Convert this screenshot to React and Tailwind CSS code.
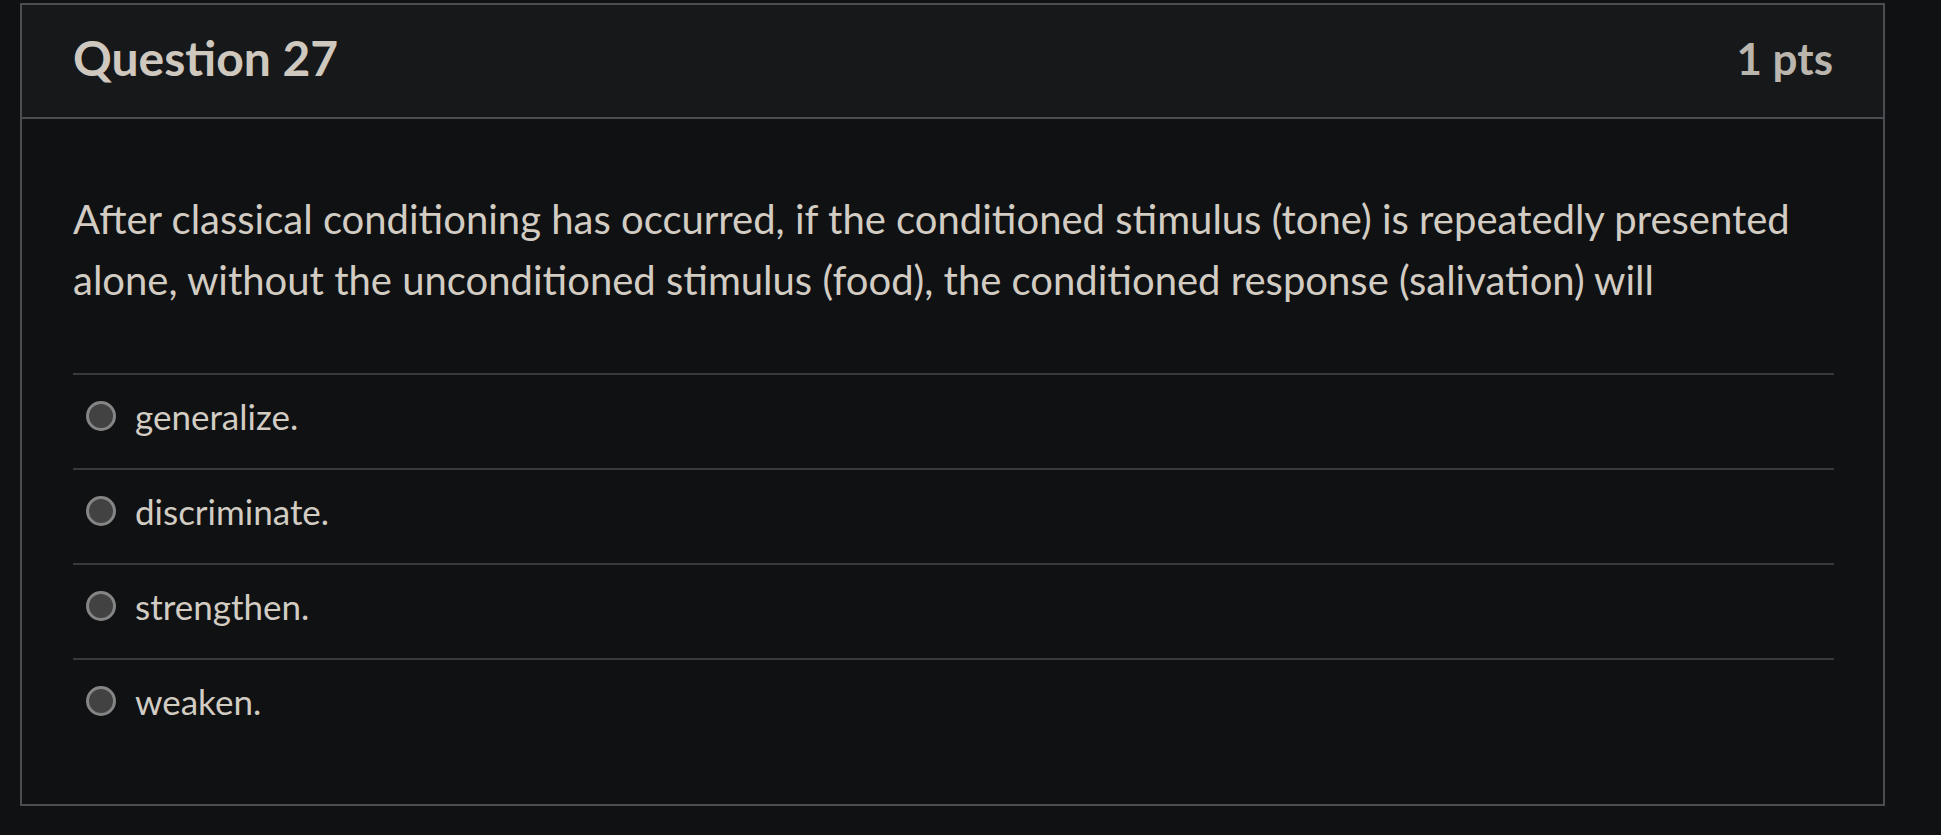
import React from "react";

const options = ["generalize.", "discriminate.", "strengthen.", "weaken."];

export default function App() {
  return (
    <div
      className="min-h-screen bg-[#0f1113] pt-[3px] pl-[20px]"
      style={{ fontFamily: "Lato, 'Open Sans', sans-serif" }}
    >
      <div className="w-[1865px] border-2 border-[#4a4e52] bg-[#0f1113]">
        <div className="flex h-[114px] items-center justify-between border-b-2 border-[#4a4e52] bg-[#17181a] pb-[7px] pl-[51px] pr-[50px]">
          <h2 className="text-[48px] font-bold text-[#cfc8bf]">Question 27</h2>
          <div className="text-[44px] font-bold text-[#bab5ad]">1 pts</div>
        </div>
        <div className="pb-[51px] pl-[51px] pr-[49px] pt-[70px]">
          <p className="text-[40px] leading-[61px] text-[#d2ccc3]">
            After classical conditioning has occurred, if the conditioned stimulus (tone) is repeatedly presented
            alone, without the unconditioned stimulus (food), the conditioned response (salivation) will
          </p>
          <ul className="mt-[62px]">
            {options.map((o) => (
              <li key={o} className="border-t-2 border-[#393a3f]">
                <label className="flex h-[93px] items-center pb-[11px] pl-[13px]">
                  <span className="h-[30px] w-[30px] shrink-0 rounded-full border-[3px] border-[#858585] bg-[#424242]" />
                  <span className="ml-[19px] text-[35px] text-[#d2ccc3]">{o}</span>
                </label>
              </li>
            ))}
          </ul>
        </div>
      </div>
    </div>
  );
}
